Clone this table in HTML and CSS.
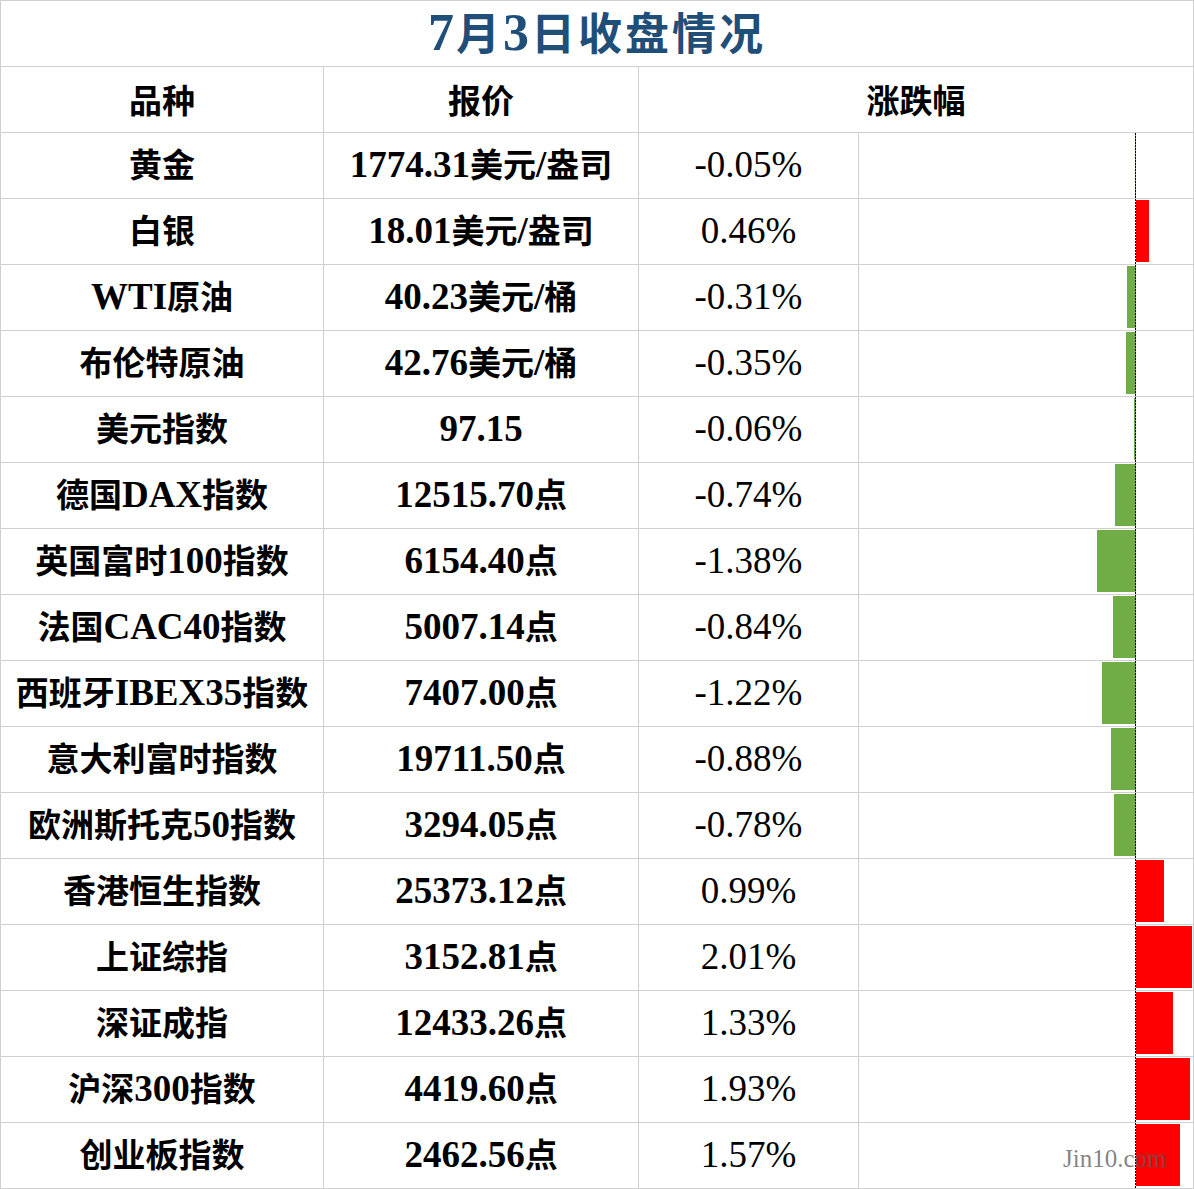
FILE: index.html
```html
<!DOCTYPE html>
<html lang="zh">
<head>
<meta charset="utf-8">
<title>7月3日收盘情况</title>
<link rel="stylesheet" href="styles.css">
</head>
<body>
<div class="page">
  <div class="sheet">
    <div class="cell title"><span><span class="l">7</span><span class="c">月</span><span class="l">3</span><span class="c">日收盘情况</span></span></div>

    <div class="cell head"><span>品种</span></div>
    <div class="cell head"><span>报价</span></div>
    <div class="cell head span2"><span>涨跌幅</span></div>

    <div class="cell name"><span><span class="c">黄金</span></span></div>
    <div class="cell price"><span>1774.31<span class="c">美元</span>/<span class="c">盎司</span></span></div>
    <div class="cell pct"><span>-0.05%</span></div>
    <div class="cell chart"><i class="bar down" style="width:1.4px"></i></div>

    <div class="cell name"><span><span class="c">白银</span></span></div>
    <div class="cell price"><span>18.01<span class="c">美元</span>/<span class="c">盎司</span></span></div>
    <div class="cell pct"><span>0.46%</span></div>
    <div class="cell chart"><i class="bar up" style="width:12.9px"></i></div>

    <div class="cell name"><span>WTI<span class="c">原油</span></span></div>
    <div class="cell price"><span>40.23<span class="c">美元</span>/<span class="c">桶</span></span></div>
    <div class="cell pct"><span>-0.31%</span></div>
    <div class="cell chart"><i class="bar down" style="width:8.7px"></i></div>

    <div class="cell name"><span><span class="c">布伦特原油</span></span></div>
    <div class="cell price"><span>42.76<span class="c">美元</span>/<span class="c">桶</span></span></div>
    <div class="cell pct"><span>-0.35%</span></div>
    <div class="cell chart"><i class="bar down" style="width:9.8px"></i></div>

    <div class="cell name"><span><span class="c">美元指数</span></span></div>
    <div class="cell price"><span>97.15</span></div>
    <div class="cell pct"><span>-0.06%</span></div>
    <div class="cell chart"><i class="bar down" style="width:1.7px"></i></div>

    <div class="cell name"><span><span class="c">德国</span>DAX<span class="c">指数</span></span></div>
    <div class="cell price"><span>12515.70<span class="c">点</span></span></div>
    <div class="cell pct"><span>-0.74%</span></div>
    <div class="cell chart"><i class="bar down" style="width:20.7px"></i></div>

    <div class="cell name"><span><span class="c">英国富时</span>100<span class="c">指数</span></span></div>
    <div class="cell price"><span>6154.40<span class="c">点</span></span></div>
    <div class="cell pct"><span>-1.38%</span></div>
    <div class="cell chart"><i class="bar down" style="width:38.6px"></i></div>

    <div class="cell name"><span><span class="c">法国</span>CAC40<span class="c">指数</span></span></div>
    <div class="cell price"><span>5007.14<span class="c">点</span></span></div>
    <div class="cell pct"><span>-0.84%</span></div>
    <div class="cell chart"><i class="bar down" style="width:23.5px"></i></div>

    <div class="cell name"><span><span class="c">西班牙</span>IBEX35<span class="c">指数</span></span></div>
    <div class="cell price"><span>7407.00<span class="c">点</span></span></div>
    <div class="cell pct"><span>-1.22%</span></div>
    <div class="cell chart"><i class="bar down" style="width:34.2px"></i></div>

    <div class="cell name"><span><span class="c">意大利富时指数</span></span></div>
    <div class="cell price"><span>19711.50<span class="c">点</span></span></div>
    <div class="cell pct"><span>-0.88%</span></div>
    <div class="cell chart"><i class="bar down" style="width:24.6px"></i></div>

    <div class="cell name"><span><span class="c">欧洲斯托克</span>50<span class="c">指数</span></span></div>
    <div class="cell price"><span>3294.05<span class="c">点</span></span></div>
    <div class="cell pct"><span>-0.78%</span></div>
    <div class="cell chart"><i class="bar down" style="width:21.8px"></i></div>

    <div class="cell name"><span><span class="c">香港恒生指数</span></span></div>
    <div class="cell price"><span>25373.12<span class="c">点</span></span></div>
    <div class="cell pct"><span>0.99%</span></div>
    <div class="cell chart"><i class="bar up" style="width:27.7px"></i></div>

    <div class="cell name"><span><span class="c">上证综指</span></span></div>
    <div class="cell price"><span>3152.81<span class="c">点</span></span></div>
    <div class="cell pct"><span>2.01%</span></div>
    <div class="cell chart"><i class="bar up" style="width:56.3px"></i></div>

    <div class="cell name"><span><span class="c">深证成指</span></span></div>
    <div class="cell price"><span>12433.26<span class="c">点</span></span></div>
    <div class="cell pct"><span>1.33%</span></div>
    <div class="cell chart"><i class="bar up" style="width:37.2px"></i></div>

    <div class="cell name"><span><span class="c">沪深</span>300<span class="c">指数</span></span></div>
    <div class="cell price"><span>4419.60<span class="c">点</span></span></div>
    <div class="cell pct"><span>1.93%</span></div>
    <div class="cell chart"><i class="bar up" style="width:54px"></i></div>

    <div class="cell name"><span><span class="c">创业板指数</span></span></div>
    <div class="cell price"><span>2462.56<span class="c">点</span></span></div>
    <div class="cell pct"><span>1.57%</span></div>
    <div class="cell chart"><i class="bar up" style="width:44px"></i></div>
  </div>
  <div class="watermark">Jin10.com</div>
</div>
</body>
</html>
```

FILE: styles.css
```css
html, body {
  margin: 0;
  padding: 0;
  background: #ffffff;
}

.page {
  position: relative;
  width: 1194px;
  height: 1189px;
}

.sheet {
  display: grid;
  grid-template-columns: 323px 315px 220px 335px;
  grid-auto-rows: 66px;
  border-left: 1px solid #d0d0d0;
  border-top: 1px solid #d0d0d0;
  width: 1194px;
  box-sizing: border-box;
  font-family: "Liberation Serif", "Noto Sans CJK SC", serif;
  color: #000;
}

.cell {
  box-sizing: border-box;
  border-right: 1px solid #d0d0d0;
  border-bottom: 1px solid #d0d0d0;
  display: flex;
  align-items: center;
  justify-content: center;
  white-space: nowrap;
  font-size: 37px;
  line-height: 1.3;
}

.c {
  font-family: "Noto Sans CJK SC", sans-serif;
  font-size: 33px;
}

.title {
  grid-column: 1 / -1;
  color: #1f4e79;
  font-weight: 700;
  line-height: 1.2;
}

.title .l {
  font-size: 52px;
  font-family: "Liberation Serif", serif;
  letter-spacing: 2px;
}

.title .c {
  font-size: 44px;
  letter-spacing: 3px;
}

.head {
  font-family: "Noto Sans CJK SC", sans-serif;
  font-size: 33px;
  font-weight: 700;
}

.span2 {
  grid-column: span 2;
}

.name,
.price {
  font-weight: 700;
}

.pct {
  font-weight: 400;
}

.chart {
  position: relative;
  display: block;
}

.chart::after {
  content: "";
  position: absolute;
  left: 276px;
  top: 0;
  bottom: -1px;
  width: 1px;
  background: repeating-linear-gradient(to bottom, #000 0 2px, transparent 2px 3px);
  z-index: 1;
}

.bar {
  position: absolute;
  top: 1px;
  height: 62px;
  display: block;
}

.up {
  left: 277px;
  background: #ff0000;
}

.down {
  right: 57px;
  background: #70ad47;
}

.watermark {
  position: absolute;
  left: 1063px;
  top: 1146px;
  font-family: "Liberation Serif", serif;
  font-size: 25px;
  line-height: 1;
  color: rgba(90, 90, 90, 0.75);
  z-index: 2;
}
```
